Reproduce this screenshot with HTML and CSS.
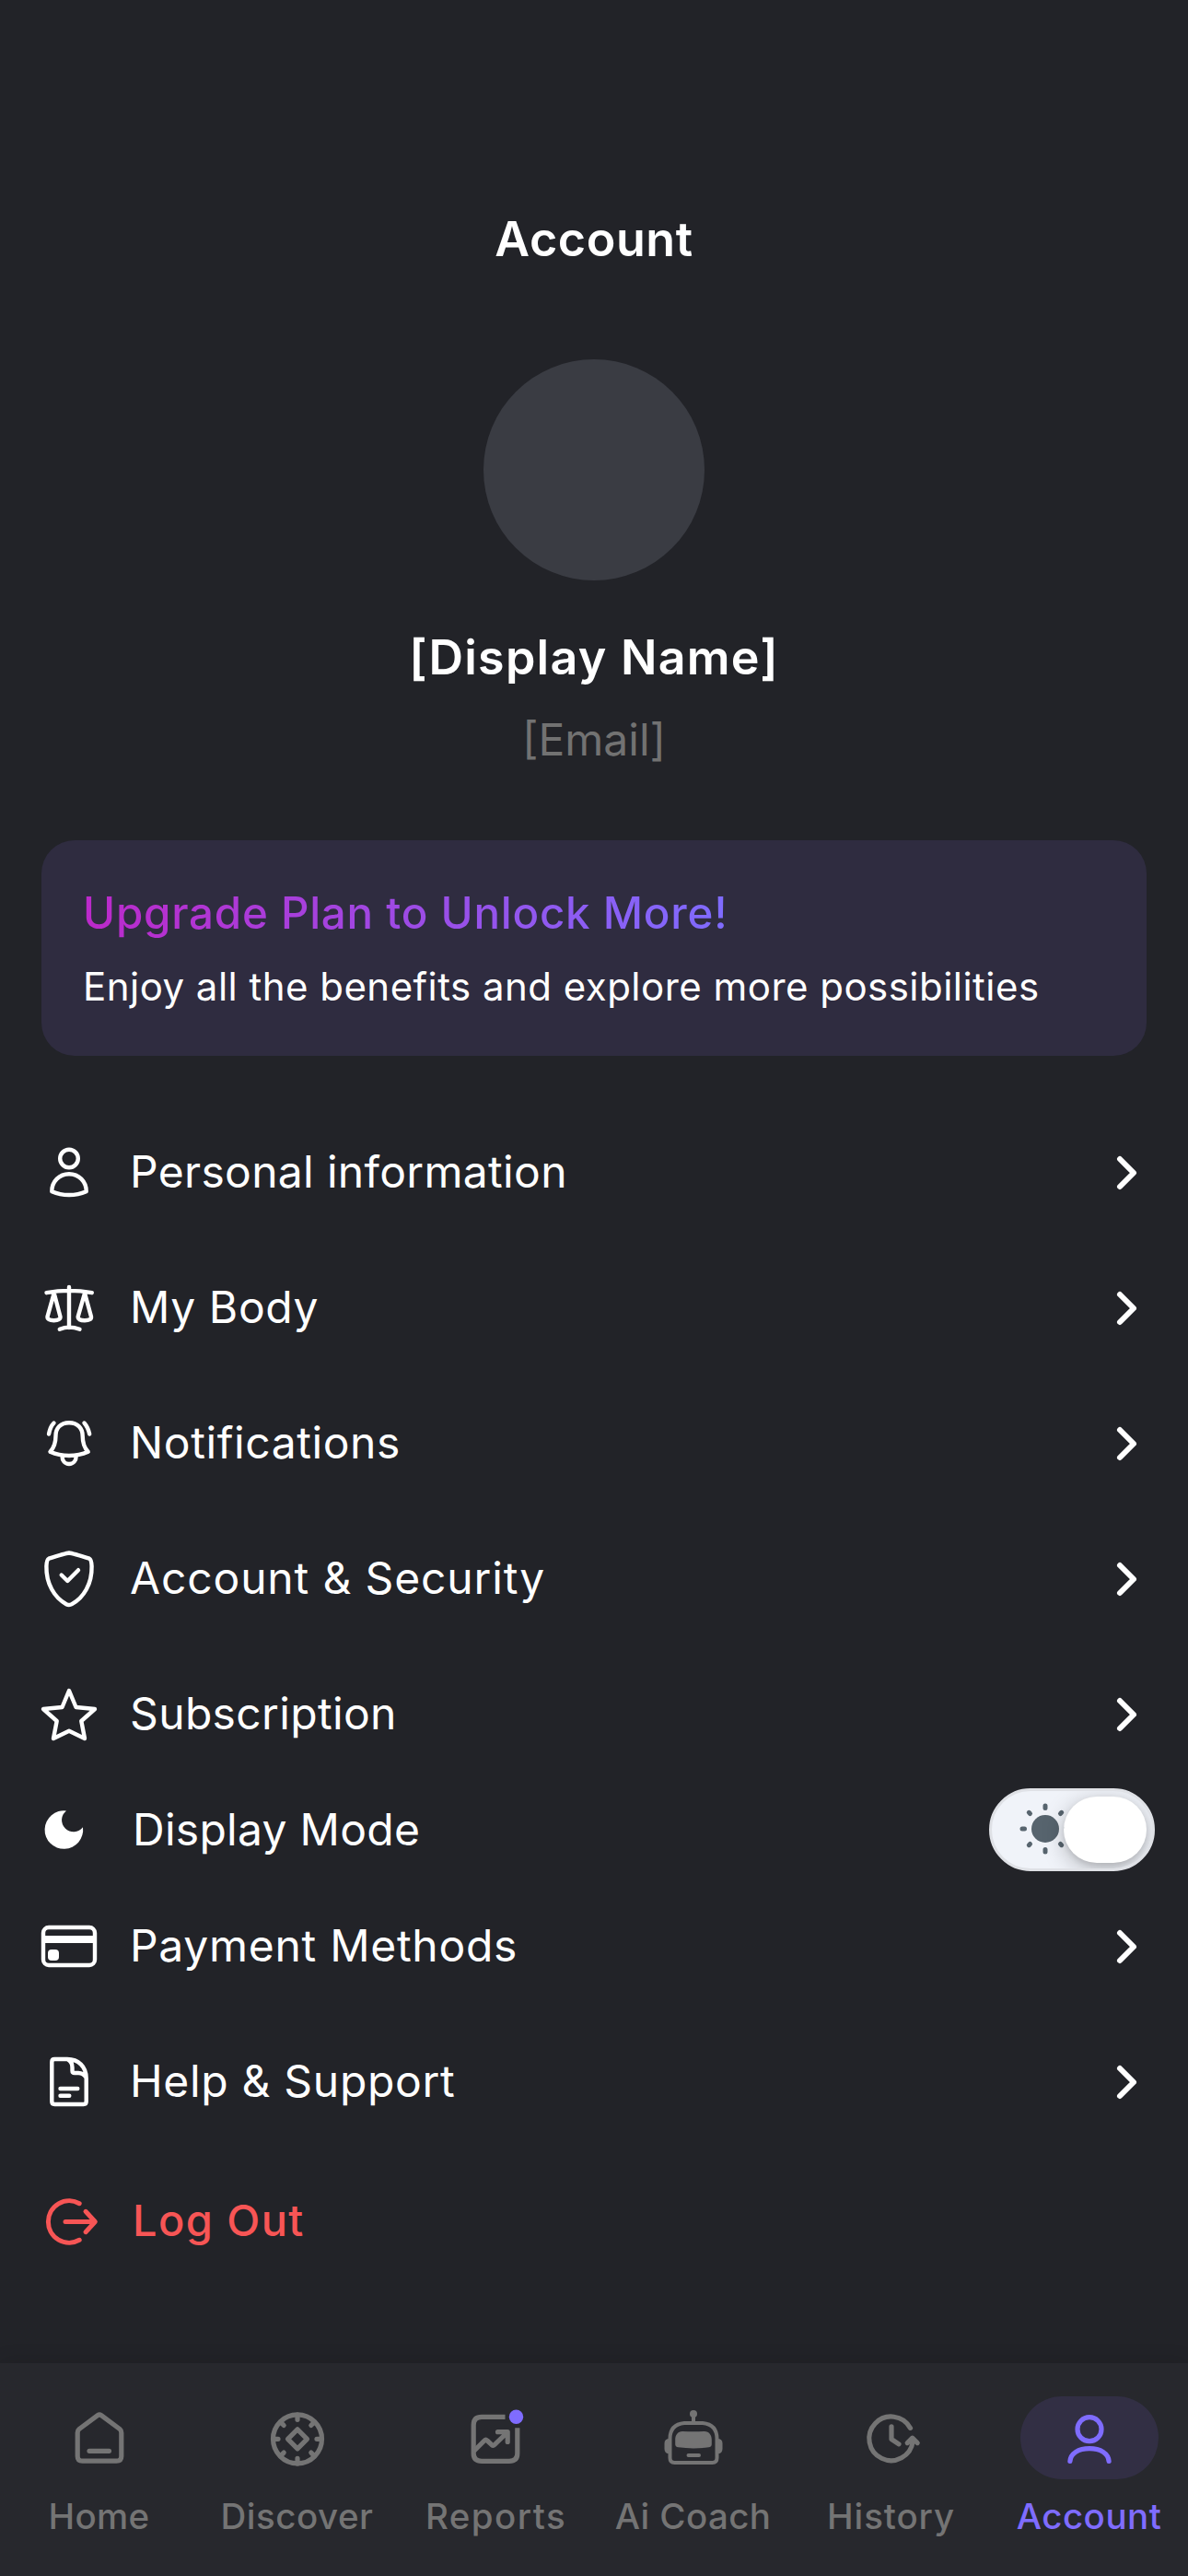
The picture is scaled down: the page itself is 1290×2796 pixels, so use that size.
FILE: index.html
```
<!DOCTYPE html>
<html lang="en">
<head>
<meta charset="utf-8">
<title>Account</title>
<link rel="stylesheet" href="styles.css">
</head>
<body>
<svg class="defs" width="0" height="0" aria-hidden="true">
  <symbol id="chevron" viewBox="0 0 60 60"><path d="M31 15 46 30 31 45" fill="none" stroke="currentColor" stroke-width="6" stroke-linecap="round" stroke-linejoin="round"/></symbol>
</svg>
<div class="screen">
  <main class="content">
    <h1 class="page-title">Account</h1>
    <section class="profile">
      <div class="avatar"></div>
      <div class="name">[Display Name]</div>
      <div class="email">[Email]</div>
    </section>

    <section class="upgrade">
      <div class="upgrade-title">Upgrade Plan to Unlock More!</div>
      <div class="upgrade-text">Enjoy all the benefits and explore more possibilities</div>
    </section>

    <nav class="menu">
      <a class="row">
        <svg class="icon" viewBox="0 0 60 60"><circle cx="30" cy="14.5" r="9.8"/><path d="M11.3 50.2C11.3 39.3 19.4 31.3 30 31.3S48.7 39.3 48.7 50.2Q40 54 30 54T11.3 50.2Z"/></svg>
        <span class="label ls-personal">Personal information</span>
        <svg class="icon chevron"><use href="#chevron"/></svg>
      </a>
      <a class="row">
        <svg class="icon" viewBox="0 0 60 60"><path d="M30 7V51M5.5 13.2Q30 8.500 54.8 13.200M19.800 52.800Q30 48.500 41.500 52.800M13.700 13.500 6.500 39.200Q6.200 43.200 13.500 43.200T20.500 39.200ZM47 13.500 39.700 39.200Q39.500 43.200 47 43.200T54 39.200Z"/></svg>
        <span class="label ls-body">My Body</span>
        <svg class="icon chevron"><use href="#chevron"/></svg>
      </a>
      <a class="row">
        <svg class="icon" viewBox="0 0 60 60"><path d="M30 7.200C20.500 7.200 15.500 13.500 15.500 21.500C15.500 29.500 14 34 9.500 38.800Q19 43 30 43T50.700 38.800C46 34 44.700 29.500 44.700 21.500C44.700 13.500 39.500 7.200 30 7.200ZM22.500 43.500C22.500 48.500 25.500 52 30 52S37.700 48.500 37.700 43.500M13.500 7.500Q9.500 11.500 8 19.500M46.500 7.500Q50.500 12 52.200 19.500"/></svg>
        <span class="label ls-notif">Notifications</span>
        <svg class="icon chevron"><use href="#chevron"/></svg>
      </a>
      <a class="row">
        <svg class="icon" viewBox="0 0 60 60"><path d="M30 1.500Q34 2 52 7.700Q54.300 8.800 54.600 16C55 35 46 50 33 57.200Q30 58.800 27 57.200C14 50 5 35 5.400 16Q5.700 8.800 8 7.700Q26 2 30 1.500ZM21.700 25.500 28.300 32 40 20.200"/></svg>
        <span class="label ls-security">Account &amp; Security</span>
        <svg class="icon chevron"><use href="#chevron"/></svg>
      </a>
      <a class="row">
        <svg class="icon" viewBox="0 0 60 60"><path d="M30 4 37.500 22 58 24 43.300 37 47 56 30 47.700 13 56 16.700 37 2 24 22.500 22Z"/></svg>
        <span class="label ls-subscription">Subscription</span>
        <svg class="icon chevron"><use href="#chevron"/></svg>
      </a>
      <div class="row row-mode">
        <svg class="icon" viewBox="0 0 60 60"><path class="solid" d="M27 9.400A12.800 12.800 0 1 0 45 27.300A20.800 20.800 0 1 1 27 9.400Z"/></svg>
        <span class="label ls-mode">Display Mode</span>
        <span class="toggle">
          <svg class="sun" viewBox="0 0 56 56"><circle cx="28" cy="28" r="15"/><path d="M28 3V5.500M28 50.500V53M3 28H5.500M50.500 28H53M10.300 10.300 11.500 11.500M44.500 44.500 45.700 45.700M10.300 45.700 11.500 44.500M44.500 11.500 45.700 10.300"/></svg>
          <span class="thumb"></span>
        </span>
      </div>
      <a class="row">
        <svg class="icon" viewBox="0 0 60 60"><rect x="2" y="9" width="56" height="41" rx="6"/><path class="solid" d="M2 18H58V26H2Z"/><rect class="solid" x="7" y="33" width="12" height="12" rx="4"/></svg>
        <span class="label ls-payment">Payment Methods</span>
        <svg class="icon chevron"><use href="#chevron"/></svg>
      </a>
      <a class="row">
        <svg class="icon" viewBox="0 0 60 60"><path d="M28 5H14.300Q11.300 5 11.300 8V51Q11.300 54 14.300 54H45.700Q48.700 54 48.700 51V26C48.700 13 40 5 28 5ZM28.500 5.200C32 7 33.500 10 33.500 14V17.500Q33.500 20 36 20H40C44 20 46.500 21.500 48.500 25M20.500 37H39.300M20.500 44.700H30.300"/></svg>
        <span class="label ls-help">Help &amp; Support</span>
        <svg class="icon chevron"><use href="#chevron"/></svg>
      </a>
      <a class="row row-logout">
        <svg class="icon" viewBox="0 0 60 60"><path d="M41.200 10.700A22.700 22.700 0 1 0 41.200 50.300M26 30.500H58M48 19.300 58.300 30.500 48 41.700"/></svg>
        <span class="label ls-logout">Log Out</span>
      </a>
    </nav>
  </main>

  <nav class="tabs">
    <a class="tab">
      <span class="pill"><svg class="icon" viewBox="0 0 60 60"><path d="M8 20.500 28 5.700Q30 4.300 32 5.700L52 20.500Q53.800 22 53.800 24.500V50Q53.800 55.200 48.500 55.200H11.500Q6.200 55.200 6.200 50V24.500Q6.200 22 8 20.500ZM19 44.300H40.500"/></svg></span>
      <span class="tab-label ls-home">Home</span>
    </a>
    <a class="tab">
      <span class="pill"><svg class="icon" viewBox="0 0 60 60"><circle cx="30" cy="31.300" r="26.500"/><path d="M30 5V10.300M30 52.300V58M4 31.300H9M51 31.300H56M12 13.300 15.200 16.500M48 49.300 44.800 46.100M12 49.300 15.200 46.100M48 13.300 44.800 16.500M30 20.800 40.500 31.300 30 41.800 19.500 31.300Z"/></svg></span>
      <span class="tab-label ls-discover">Discover</span>
    </a>
    <a class="tab">
      <span class="pill"><svg class="icon" viewBox="0 0 60 60"><path stroke-linecap="butt" d="M40.500 7.300H15Q6.200 7.300 6.200 16V47Q6.200 55.300 15 55.300H45Q53.800 55.300 53.800 47V19.300"/><path d="M7.500 43.500 18 33Q19.500 31.500 21 33L26 37.700Q27.500 39 29 37.500L43 24M32.500 23.700H43.200V34.500"/><circle class="dot" cx="52.500" cy="7.300" r="7.700"/></svg></span>
      <span class="tab-label ls-reports">Reports</span>
    </a>
    <a class="tab">
      <span class="pill"><svg class="icon robot" viewBox="0 0 60 60"><path d="M30 4V13M20 14H40Q55.500 15.500 55.500 31V52Q55.500 57 50.500 57H9.500Q4.500 57 4.500 52V31Q4.500 15.500 20 14ZM24.500 49H36"/><circle class="solid" cx="30" cy="4" r="4"/><path class="solid" d="M4 31Q-1.500 31-1.500 36V42Q-1.500 47.300 4 47.300ZM56 31Q61.500 31 61.500 36V42Q61.500 47.300 56 47.300ZM18 22.900Q30 23.800 42 22.900C47 22.900 49.800 27 49.800 32V37Q49.800 40 46.500 40.300Q30 42.500 13.500 40.300Q10.200 40 10.200 37V32C10.200 27 13 22.900 18 22.900Z"/></svg></span>
      <span class="tab-label ls-coach">Ai Coach</span>
    </a>
    <a class="tab">
      <span class="pill"><svg class="icon" viewBox="0 0 60 60"><path d="M50.500 19.400A23.800 23.800 0 1 0 53.200 34M30 17.800V31.500L38 36.800M47.200 35.600 52.700 30.200 58.200 35.600"/></svg></span>
      <span class="tab-label ls-history">History</span>
    </a>
    <a class="tab active">
      <span class="pill"><svg class="icon" viewBox="0 0 60 60"><circle cx="30" cy="20.700" r="13"/><path d="M8.900 55.500C9.500 47 18 41.700 30 41.700S50.500 47 51.100 55.500"/></svg></span>
      <span class="tab-label ls-account">Account</span>
    </a>
  </nav>
</div>
</body>
</html>
```
FILE: styles.css
```
* { box-sizing: border-box; }

body {
  margin: 0;
  background: #222328;
  color: #fff;
  font-family: Inter, "Liberation Sans", sans-serif;
}

.defs { position: absolute; }

.screen {
  width: 1290px;
  height: 2796px;
  display: flex;
  flex-direction: column;
  overflow: hidden;
}

.content { flex: 1; padding: 230px 45px 0; }

.page-title {
  margin: 0;
  text-align: center;
  font-size: 52px;
  line-height: 60px;
  font-weight: 600;
  letter-spacing: 0.6px;
}

.profile {
  display: flex;
  flex-direction: column;
  align-items: center;
  padding-top: 100px;
}

.avatar {
  width: 240px;
  height: 240px;
  border-radius: 50%;
  background: #3a3c43;
}

.name {
  margin-top: 54px;
  font-size: 52px;
  line-height: 60px;
  font-weight: 600;
  letter-spacing: 1.25px;
}

.email {
  margin-top: 29px;
  font-size: 48px;
  line-height: 60px;
  color: #727272;
}

.upgrade {
  height: 234px;
  margin-top: 79px;
  padding: 50px 45px 0;
  border-radius: 36px;
  background: #2f2c40;
}

.upgrade-title {
  width: max-content;
  font-size: 47.5px;
  line-height: 58px;
  font-weight: 500;
  letter-spacing: 0.74px;
  color: transparent;
  background: linear-gradient(90deg, #bc29ca, #7f6cff);
  background-clip: text;
  -webkit-background-clip: text;
}

.upgrade-text {
  margin-top: 26px;
  font-size: 42px;
  line-height: 50px;
  letter-spacing: 0.47px;
  white-space: nowrap;
}

.menu { margin-top: 53px; }

.row {
  display: flex;
  align-items: flex-start;
  gap: 36px;
  height: 147px;
  padding-top: 44px;
}

.row-mode { height: 105px; padding-top: 22px; gap: 39px; }
.row-logout { padding-top: 48px; gap: 39px; color: #f75555; }

.icon {
  flex: none;
  width: 60px;
  height: 60px;
  overflow: visible;
  fill: none;
  stroke: currentColor;
  stroke-width: 4.4;
  stroke-linecap: round;
  stroke-linejoin: round;
}

.solid { fill: currentColor; stroke: none; }

.label {
  flex: 1;
  font-size: 48px;
  line-height: 57px;
  white-space: nowrap;
}

.row-mode .label { line-height: 59px; }
.row-logout .label { font-size: 47px; line-height: 58px; font-weight: 500; }
.row-logout .icon { stroke-width: 5; }

.toggle {
  display: flex;
  align-items: center;
  justify-content: space-between;
  width: 180px;
  height: 90px;
  margin: -15px -9px 0 0;
  padding: 0 6px 0 30px;
  border: 3px solid #dfe1e6;
  border-radius: 45px;
  background: #f0f3f9;
  overflow: hidden;
}

.sun {
  flex: none;
  width: 56px;
  height: 56px;
  margin-top: -2px;
  fill: #57646e;
  stroke: #57646e;
  stroke-width: 0;
}

.sun path { stroke-width: 5; stroke-linecap: round; }

.thumb {
  flex: none;
  width: 90px;
  height: 72px;
  margin-left: -8px;
  border-radius: 36px;
  background: #fff;
  box-shadow: 0 6px 24px rgba(0, 0, 0, 0.25), 0 3px 6px rgba(0, 0, 0, 0.1);
}

.tabs {
  display: grid;
  grid-template-columns: repeat(6, 1fr);
  height: 231px;
  padding-top: 36px;
  background: #27282d;
  box-shadow: 0 -4px 18px rgba(0, 0, 0, 0.1);
  color: #747474;
}

.tab { display: flex; flex-direction: column; align-items: center; }

.pill {
  display: flex;
  align-items: center;
  justify-content: center;
  width: 150px;
  height: 90px;
  border-radius: 45px;
}

.tab .icon { stroke-width: 5.2; }
.tab .robot { stroke-width: 4; }
.dot { fill: #7f6cff; stroke: none; }

.tab-label {
  margin-top: 16px;
  font-size: 38.5px;
  line-height: 48px;
  font-weight: 500;
  white-space: nowrap;
}

.active { color: #7f6cff; }
.active .pill { background: #322f44; }

/* tracking per label */
.ls-personal { letter-spacing: 0.32px; }
.ls-body { letter-spacing: 0.6px; }
.ls-notif { letter-spacing: 0.59px; }
.ls-security { letter-spacing: 0.85px; }
.ls-subscription { letter-spacing: 0.35px; }
.ls-mode { letter-spacing: 0.28px; }
.ls-payment { letter-spacing: 0.71px; }
.ls-help { letter-spacing: 0.68px; }
.ls-logout { letter-spacing: 1.4px; }
.ls-home { letter-spacing: 0.29px; }
.ls-discover { letter-spacing: 0.5px; }
.ls-reports { letter-spacing: 1.43px; padding-left: 2px; }
.ls-coach { letter-spacing: 0.37px; }
.ls-history { letter-spacing: 0.9px; }
.ls-account { letter-spacing: 0.5px; }
```
